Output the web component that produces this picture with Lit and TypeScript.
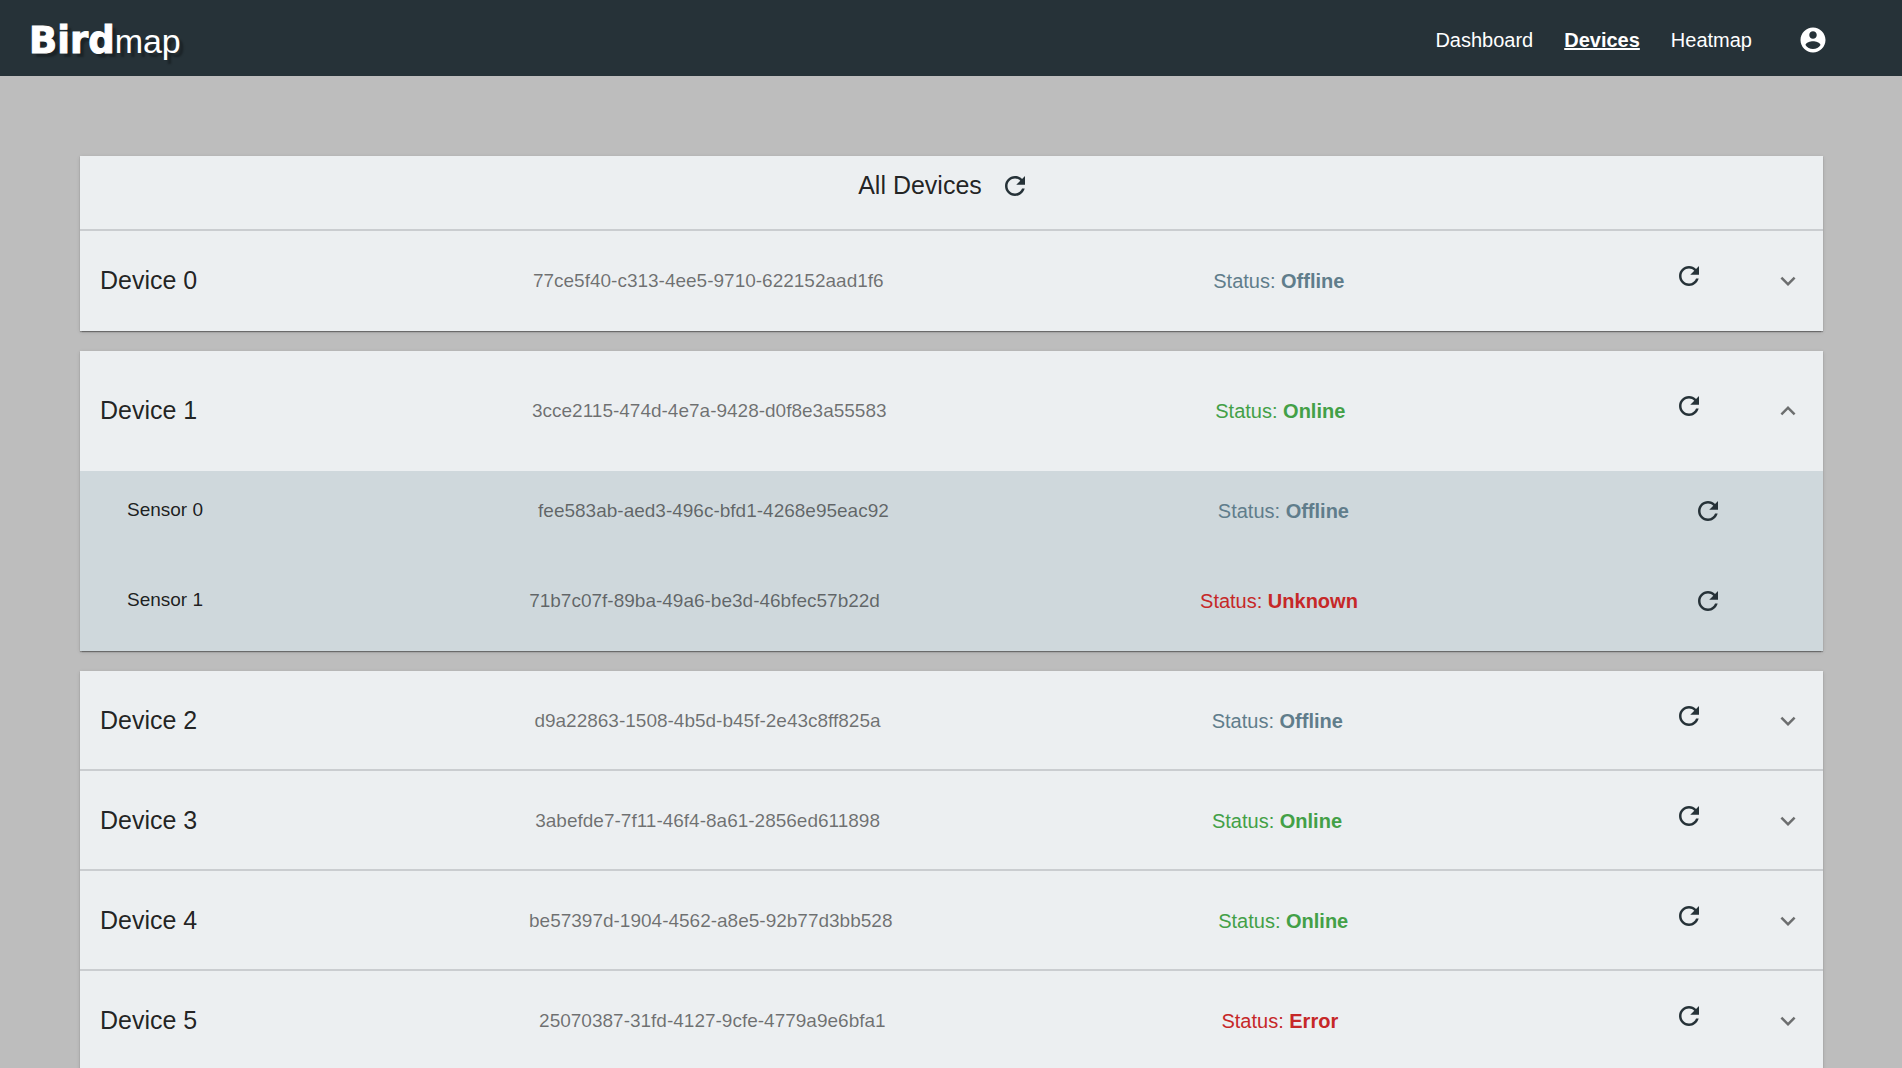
import { LitElement, html, css, svg } from "lit";
import { customElement, property, state } from "lit/decorators.js";
import { classMap } from "lit/directives/class-map.js";

type Status = "Online" | "Offline" | "Unknown" | "Error";
interface Sensor { name: string; id: string; status: Status; }
interface Device extends Sensor { sensors: Sensor[]; }

const DEVICES: Device[] = [
  { name: "Device 0", id: "77ce5f40-c313-4ee5-9710-622152aad1f6", status: "Offline", sensors: [] },
  {
    name: "Device 1", id: "3cce2115-474d-4e7a-9428-d0f8e3a55583", status: "Online",
    sensors: [
      { name: "Sensor 0", id: "fee583ab-aed3-496c-bfd1-4268e95eac92", status: "Offline" },
      { name: "Sensor 1", id: "71b7c07f-89ba-49a6-be3d-46bfec57b22d", status: "Unknown" },
    ],
  },
  { name: "Device 2", id: "d9a22863-1508-4b5d-b45f-2e43c8ff825a", status: "Offline", sensors: [] },
  { name: "Device 3", id: "3abefde7-7f11-46f4-8a61-2856ed611898", status: "Online", sensors: [] },
  { name: "Device 4", id: "be57397d-1904-4562-a8e5-92b77d3bb528", status: "Online", sensors: [] },
  { name: "Device 5", id: "25070387-31fd-4127-9cfe-4779a9e6bfa1", status: "Error", sensors: [] },
];

const ICONS = {
  refresh: svg`<path d="M17.65 6.35C16.2 4.9 14.21 4 12 4c-4.42 0-7.99 3.58-7.99 8s3.57 8 7.99 8c3.73 0 6.84-2.55 7.73-6h-2.08c-.82 2.33-3.04 4-5.65 4-3.31 0-6-2.69-6-6s2.69-6 6-6c1.66 0 3.14.69 4.22 1.78L13 11h7V4l-2.35 2.35z"/>`,
  expand: svg`<path d="M16.59 8.59L12 13.17 7.41 8.59 6 10l6 6 6-6z"/>`,
  collapse: svg`<path d="M12 8l-6 6 1.41 1.41L12 10.83l4.59 4.58L18 14z"/>`,
  account: svg`<path d="M12 2C6.48 2 2 6.48 2 12s4.48 10 10 10 10-4.48 10-10S17.52 2 12 2zm0 3c1.66 0 3 1.34 3 3s-1.34 3-3 3-3-1.34-3-3 1.34-3 3-3zm0 14.2c-2.5 0-4.71-1.28-6-3.22.03-1.99 4-3.08 6-3.08 1.99 0 5.97 1.09 6 3.08-1.29 1.94-3.5 3.22-6 3.22z"/>`,
};

const icon = (name: keyof typeof ICONS) =>
  html`<svg class="icon" viewBox="0 0 24 24" aria-hidden="true">${ICONS[name]}</svg>`;

const shared = css`
  * { box-sizing: border-box; }
  button {
    display: flex;
    flex: none;
    margin: 0;
    padding: 0;
    border: 0;
    background: none;
    color: #263238;
    cursor: pointer;
  }
  .icon { display: block; width: 30px; height: 30px; fill: currentColor; }
  .round { padding: 15px; }
`;

@customElement("app-header")
class AppHeader extends LitElement {
  static styles = [shared, css`
    :host { display: block; }
    .bar {
      display: flex;
      align-items: center;
      justify-content: space-between;
      min-height: 76px;
      padding: 4px 59px 0 29px;
      background: #263238;
      color: #fff;
    }
    .brand {
      display: flex;
      align-items: baseline;
      padding-top: 2px;
      color: inherit;
      font-size: 34px;
      line-height: 40px;
      text-decoration: none;
      text-shadow: 4px 4px 2px rgba(0, 0, 0, 0.3);
    }
    .strong {
      font-family: "Arial Black", "DejaVu Sans", sans-serif;
      font-size: 37px;
      font-weight: 700;
      -webkit-text-stroke: 1px #fff;
    }
    .nav { display: flex; align-items: center; gap: 31px; }
    .link { color: inherit; font-size: 20px; line-height: 30px; text-decoration: none; }
    .current { font-weight: 700; text-decoration: underline; }
    .round { color: inherit; }
  `];

  render() {
    return html`
      <header class="bar">
        <a class="brand" href="#home"><span class="strong">Bird</span><span>map</span></a>
        <nav class="nav">
          <a class="link" href="#dashboard">Dashboard</a>
          <a class="link current" href="#devices" aria-current="page">Devices</a>
          <a class="link" href="#heatmap">Heatmap</a>
          <button class="round" aria-label="Account">${icon("account")}</button>
        </nav>
      </header>`;
  }
}

@customElement("status-label")
class StatusLabel extends LitElement {
  @property() status: Status = "Offline";

  static styles = css`
    .status { font-size: 20px; line-height: 30px; white-space: nowrap; color: #c62828; }
    .online { color: #43a047; }
    .offline { color: #607d8b; }
  `;

  render() {
    const classes = {
      status: true,
      online: this.status === "Online",
      offline: this.status === "Offline",
    };
    return html`<span class=${classMap(classes)}>Status: <b>${this.status}</b></span>`;
  }
}

@customElement("device-panel")
class DevicePanel extends LitElement {
  @property({ attribute: false }) device!: Device;
  @property({ type: Boolean }) open = false;

  static styles = [shared, css`
    :host { display: block; }
    .summary {
      display: flex;
      align-items: center;
      gap: 69px;
      min-height: 100px;
      padding: 0 20px;
    }
    .open { min-height: 120px; }
    .fields {
      display: flex;
      flex: 1;
      align-items: center;
      justify-content: space-between;
    }
    .name {
      margin: 0;
      padding: 0 6px 2px 0;
      font-size: 25px;
      font-weight: 400;
      line-height: 30px;
      color: rgba(0, 0, 0, 0.87);
    }
    .id { font-size: 19px; line-height: 30px; color: rgba(0, 0, 0, 0.54); }
    .refresh { margin-bottom: 10px; }
    .toggle { color: rgba(0, 0, 0, 0.54); }
    .sensors { margin: 0; padding: 0; list-style: none; background: #cfd8dc; }
    .sensor { min-height: 90px; padding: 0 85px 10px 47px; }
    .sensor .name { font-size: 19px; }
  `];

  private toggle() {
    this.dispatchEvent(new CustomEvent("toggle-panel", { bubbles: true, composed: true }));
  }

  render() {
    const d = this.device;
    return html`
      <div class=${classMap({ summary: true, open: this.open })}>
        <div class="fields">
          <h2 class="name">${d.name}</h2>
          <span class="id">${d.id}</span>
          <status-label .status=${d.status}></status-label>
          <button class="refresh" aria-label="Refresh ${d.name}">${icon("refresh")}</button>
        </div>
        <button class="toggle" aria-label="Sensors of ${d.name}"
          aria-expanded=${this.open ? "true" : "false"} @click=${this.toggle}>
          ${icon(this.open ? "collapse" : "expand")}
        </button>
      </div>
      ${this.open ? html`
        <ul class="sensors">
          ${d.sensors.map((s) => html`
            <li class="sensor fields">
              <h3 class="name">${s.name}</h3>
              <span class="id">${s.id}</span>
              <status-label .status=${s.status}></status-label>
              <button class="round" aria-label="Refresh ${s.name}">${icon("refresh")}</button>
            </li>`)}
        </ul>` : null}`;
  }
}

@customElement("app-root")
class AppRoot extends LitElement {
  @state() private openIndex = 1;

  static styles = [shared, css`
    :host {
      display: block;
      min-height: 100vh;
      overflow: hidden;
      background: #bdbdbd;
      font-family: "Liberation Sans", Arial, sans-serif;
    }
    .page {
      display: flex;
      flex-direction: column;
      gap: 20px;
      padding: 80px 79px 0 80px;
    }
    .card {
      background: #eceff1;
      box-shadow: 0 3px 1px -2px rgba(0, 0, 0, 0.2), 0 1px 1px rgba(0, 0, 0, 0.24),
        0 1px 4px rgba(0, 0, 0, 0.12);
    }
    .heading {
      display: flex;
      align-items: center;
      justify-content: center;
      min-height: 75px;
      padding-bottom: 15px;
    }
    .title {
      margin: 0;
      padding: 0 3px 2px 0;
      font-size: 25px;
      font-weight: 400;
      line-height: 30px;
      color: rgba(0, 0, 0, 0.87);
    }
    .divided { box-shadow: inset 0 -2px #cacdd0; }
  `];

  /* Consecutive collapsed panels share a card; the open one stands alone. */
  private groups(): number[][] {
    const result: number[][] = [];
    DEVICES.forEach((_, i) => {
      const alone = i === this.openIndex || i - 1 === this.openIndex;
      if (i === 0 || alone) result.push([i]);
      else result[result.length - 1].push(i);
    });
    return result;
  }

  render() {
    return html`
      <app-header></app-header>
      <main class="page">
        ${this.groups().map((group, g) => html`
          <section class="card">
            ${g === 0 ? html`
              <div class="heading divided">
                <h1 class="title">All Devices</h1>
                <button class="round" aria-label="Refresh all devices">${icon("refresh")}</button>
              </div>` : null}
            ${group.map((i, n) => html`
              <device-panel
                class=${classMap({ divided: n < group.length - 1 })}
                .device=${DEVICES[i]}
                .open=${i === this.openIndex}
                @toggle-panel=${() => { this.openIndex = this.openIndex === i ? -1 : i; }}
              ></device-panel>`)}
          </section>`)}
      </main>`;
  }
}
